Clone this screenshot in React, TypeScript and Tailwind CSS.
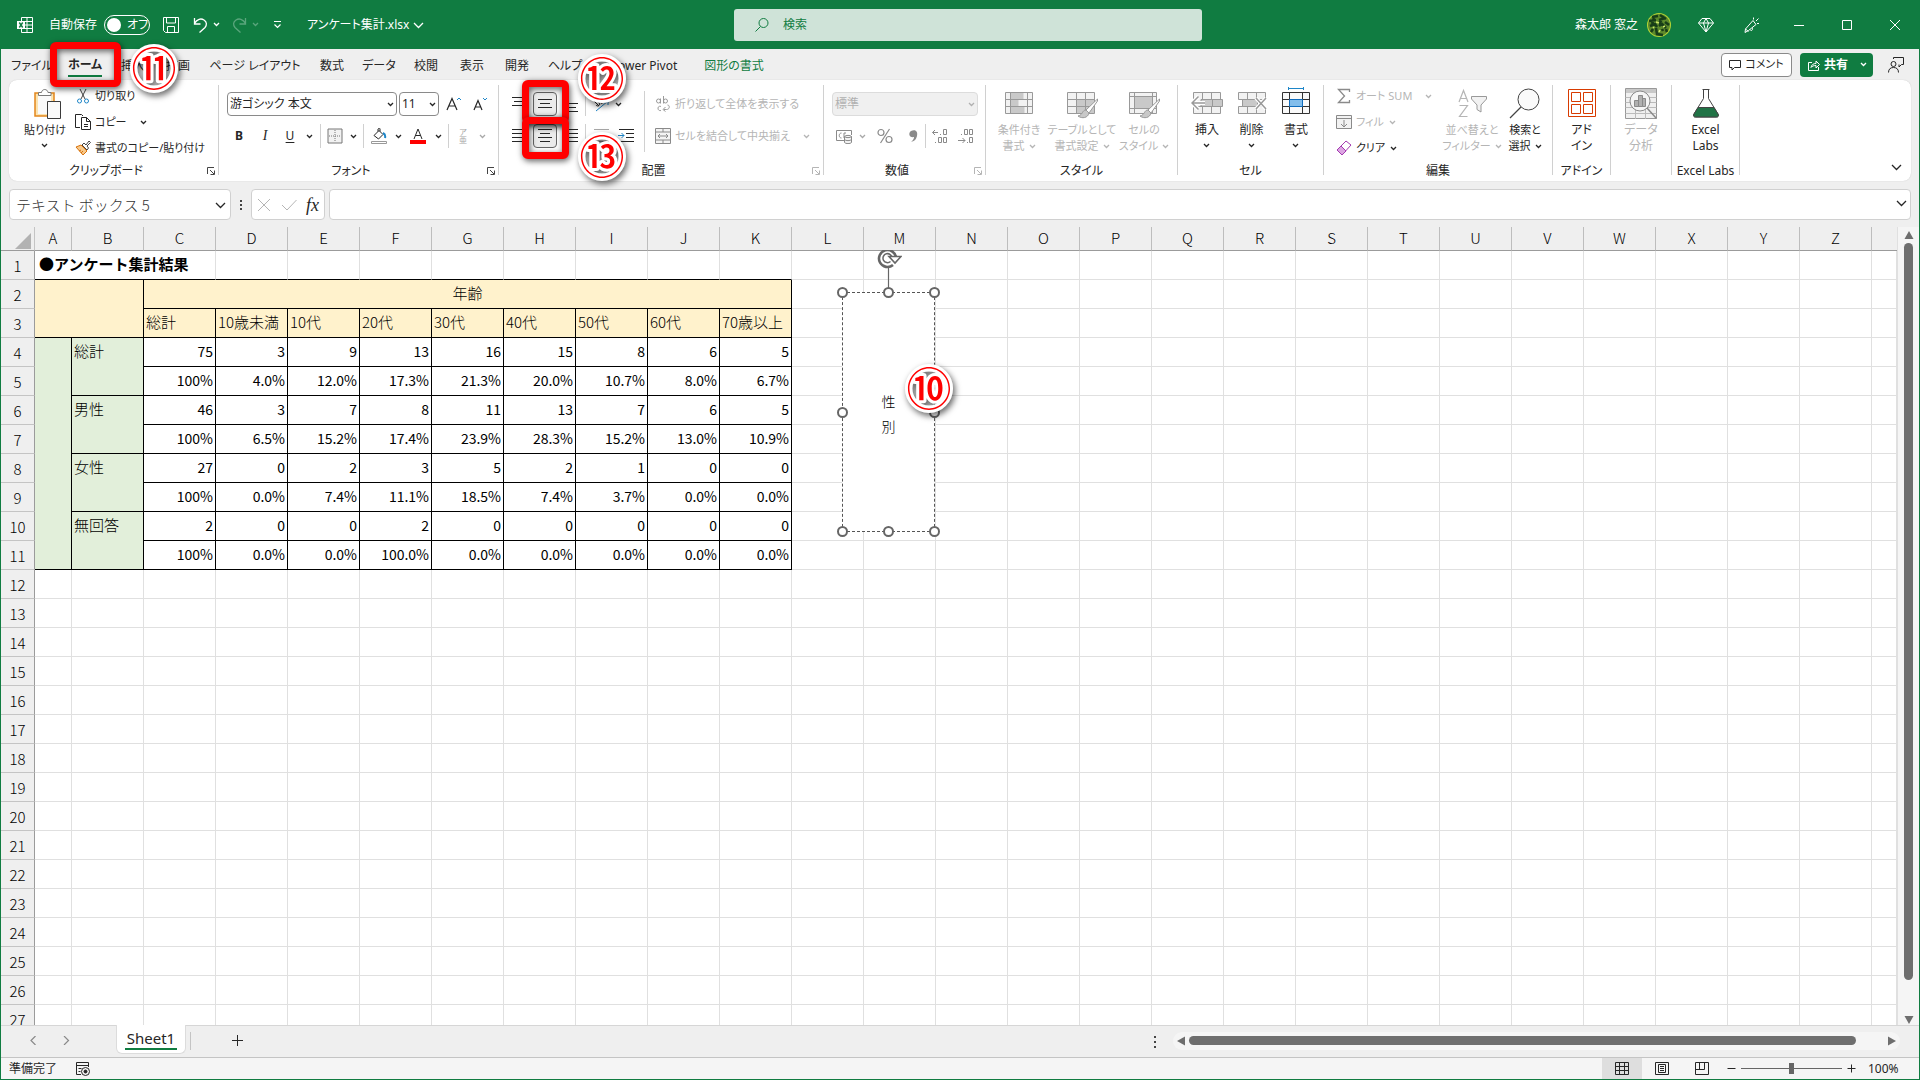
import React from 'react'

type IconProps = { children: React.ReactNode; size?: number; className?: string }

const Icon = ({ children, size = 16, className = '' }: IconProps) => (
	<svg
		width={size}
		height={size}
		viewBox={`0 0 ${size} ${size}`}
		fill="none"
		stroke="currentColor"
		className={`shrink-0 ${className}`}
		aria-hidden="true"
	>
		{children}
	</svg>
)

const Chevron = ({ className = '' }: { className?: string }) => (
	<svg
		width="7"
		height="5"
		viewBox="0 0 7 5"
		fill="none"
		stroke="currentColor"
		strokeWidth="1.3"
		className={`shrink-0 ${className}`}
		aria-hidden="true"
	>
		<path d="M1 1l2.5 2.5L6 1" />
	</svg>
)

const WideChevron = ({ className = '' }: { className?: string }) => (
	<svg
		width="11"
		height="7"
		viewBox="0 0 11 7"
		fill="none"
		stroke="currentColor"
		strokeWidth="1.3"
		className={`shrink-0 ${className}`}
		aria-hidden="true"
	>
		<path d="M1 1l4.5 4.5L10 1" />
	</svg>
)

/* ---------- title bar ---------- */

const TitleBar = () => (
	<header className="grid h-[49px] shrink-0 grid-cols-[733fr_468fr_717fr] items-center bg-[#107c41] text-white">
		<div className="flex items-center pl-4">
			<Icon size={16}>
				<path d="M4.5 4V.5h11v15h-11V12M10 .5v15M4.5 4.5h11M4.5 8h11M4.5 11.5h11" />
				<path d="M0 4h8v8H0z" fill="#fff" stroke="none" />
				<path d="M2.3 5.5l3.4 5M5.7 5.5l-3.4 5" stroke="#107c41" strokeWidth="1.4" />
			</Icon>
			<span className="ml-4">自動保存</span>
			<button
				type="button"
				role="switch"
				aria-checked="false"
				aria-label="自動保存"
				className="ml-[7px] flex h-5 w-[46px] items-center rounded-full border border-white pl-[2px]"
			>
				<span className="size-[14px] rounded-full bg-white" />
				<span className="ml-[6px] leading-4">オフ</span>
			</button>
			<button type="button" aria-label="保存" className="ml-[13px]">
				<Icon>
					<path d="M.5.5h15v15h-13l-2-2zM3.5.5v5.5h9V.5M4.5 15.5v-6h7v6" />
				</Icon>
			</button>
			<button type="button" aria-label="元に戻す" className="ml-[13px] flex items-center">
				<Icon>
					<path d="M2.5 1v6h6M2.5 6.5C5 2 9 1 12 3c3 2 3 5 1 7.5L7.5 15.5" strokeWidth="1.3" />
				</Icon>
				<Chevron className="ml-[5px]" />
			</button>
			<button
				type="button"
				aria-label="やり直し"
				disabled
				className="ml-3 flex items-center text-[#5aa57c]"
			>
				<Icon>
					<path d="M13.5 1v6h-6M13.5 6.5C11 2 7 1 4 3C1 5 1 8 3 10.500L8.500 15.500" strokeWidth="1.3" />
				</Icon>
				<Chevron className="ml-1" />
			</button>
			<button type="button" aria-label="クイック アクセスのカスタマイズ" className="ml-[14px]">
				<Icon size={9}>
					<path d="M1 1.500h7M1.500 4.500l3 3 3-3" strokeWidth="1.2" />
				</Icon>
			</button>
			<button type="button" className="ml-[25px] flex items-center gap-1 pt-px">
				アンケート集計.xlsx
				<WideChevron />
			</button>
		</div>
		<label className="flex h-8 items-center gap-[13px] rounded-[3px] bg-[#cfe3d8] pl-5 text-[#107c41]">
			<Icon>
				<circle cx="9.500" cy="6" r="4.500" />
				<path d="M6.500 9.500L1.500 14.500" />
			</Icon>
			<input
				type="search"
				aria-label="検索"
				placeholder="検索"
				className="min-w-0 flex-1 bg-transparent outline-none placeholder:text-[#107c41]"
			/>
		</label>
		<div className="flex items-center justify-end">
			<span>森太郎 窓之</span>
			<svg width="24" height="24" viewBox="0 0 24 24" className="ml-[9px]" aria-hidden="true">
				<circle cx="12" cy="12" r="12" fill="#b4d435" />
				<circle cx="12" cy="12" r="11" fill="#5d8a2c" />
				<path
					d="M5 4l6-1M13 2l6 4M2 8l7-1M7 5l-2 6M12 7l6-2M15 6l-3 5M18 9l4 3M3 13l5-2 2 3M12 13l3-2 4 4M6 16l-2 3M9 15l1 6 6 1M15 16l1 2M19 16l1 3"
					stroke="#183d18"
					strokeWidth="2.6"
					fill="none"
				/>
				<path d="M9 9l3 1M6 14l1 1M13 17l-1 2M18 13l-2 1" stroke="#cfe86a" strokeWidth="1.5" />
			</svg>
			<button type="button" aria-label="Premium" className="ml-[27px]">
				<Icon>
					<path d="M4 1.500h8l3.500 4.500L8 15 .5 6zM.5 6h15M5.500 6L8 15l2.500-9L8 1.500z" />
				</Icon>
			</button>
			<button type="button" aria-label="新機能" className="ml-[30px]">
				<Icon>
					<path d="M9 3.500l3 4L4.500 13.500 1 15.500l.5-3.500zM1.500 12l3 2.500M6 12.500c1 2 3 1 2.500-2M9.500 2.500V.500M12 4l2.500-2.500M13 6.500h2" />
				</Icon>
			</button>
			<button type="button" aria-label="最小化" className="ml-[31px]">
				<Icon>
					<path d="M3 8.500h10" />
				</Icon>
			</button>
			<button type="button" aria-label="最大化" className="ml-8">
				<Icon>
					<path d="M3.500 3.500h9v9h-9z" />
				</Icon>
			</button>
			<button type="button" aria-label="閉じる" className="mr-4 ml-8">
				<Icon>
					<path d="M3 3l10 10M13 3L3 13" />
				</Icon>
			</button>
		</div>
	</header>
)

/* ---------- ribbon tabs ---------- */

const tabs = [
	{ label: 'ファイル', width: 'w-[54px]' },
	{ label: 'ホーム', width: 'w-[52px]', active: true },
	{ label: '挿入', width: 'w-11' },
	{ label: '描画', width: 'w-[46px]' },
	{ label: 'ページ レイアウト', width: 'w-[108px]' },
	{ label: '数式', width: 'w-[46px]' },
	{ label: 'データ', width: 'w-12' },
	{ label: '校閲', width: 'w-[46px]' },
	{ label: '表示', width: 'w-[46px]' },
	{ label: '開発', width: 'w-11' },
	{ label: 'ヘルプ', width: 'w-[52px]' },
	{ label: 'Power Pivot', width: 'w-[106px]' },
	{ label: '図形の書式', width: 'w-[74px]', context: true },
]

const TabBar = () => (
	<nav className="flex h-[31px] shrink-0 items-center pr-[15px] pl-1">
		{tabs.map((tab) => (
			<button
				key={tab.label}
				type="button"
				className={`flex shrink-0 justify-center whitespace-nowrap ${tab.width} ${
					tab.context ? 'text-[#107c41]' : ''
				}`}
			>
				<span
					className={
						tab.active
							? 'border-b-2 border-[#107c41] pt-[3px] font-bold leading-5'
							: 'pt-[2px] leading-5'
					}
				>
					{tab.label}
				</span>
			</button>
		))}
		<div className="ml-auto flex items-center">
			<button
				type="button"
				className="flex h-6 w-[71px] items-center justify-center gap-1 rounded border border-[#8a8a8a] bg-white"
			>
				<Icon size={12}>
					<path d="M.5 1.500h11v7h-6l-2.500 2.500v-2.500h-2.500z" />
				</Icon>
				<span className="text-[11px]">コメント</span>
			</button>
			<button
				type="button"
				className="ml-2 flex h-6 w-[73px] items-center rounded bg-[#107c41] pl-2 font-bold text-white"
			>
				<Icon size={12}>
					<path d="M4 3.500H.500v8h10V8M3 8.500c.5-3 2.500-4 5-4V2l3.500 3.500L8 9V6.500c-2 0-4 .5-5 2z" />
				</Icon>
				<span className="ml-1">共有</span>
				<Chevron className="ml-3" />
			</button>
			<button type="button" aria-label="フィードバック" className="ml-[15px]">
				<Icon>
					<circle cx="5.500" cy="7" r="2.500" />
					<path d="M.5 15.500c0-3.500 2-5 5-5s5 1.500 5 5M5.500 2V.500h10v7h-2l-2.500 2.500v-2.500" />
				</Icon>
			</button>
		</div>
	</nav>
)

/* ---------- ribbon building blocks ---------- */

const Launcher = ({ disabled = false }: { disabled?: boolean }) => (
	<button
		type="button"
		aria-label="詳細設定"
		disabled={disabled}
		className="mr-[3px] text-[#444] disabled:text-[#b5b5b5]"
	>
		<Icon size={8}>
			<path d="M.5 7V.500H7M3 3l4 4M7.500 3.500v4h-4" />
		</Icon>
	</button>
)

type GroupProps = {
	label: string
	width: string
	launcher?: 'on' | 'off'
	children: React.ReactNode
}

const Group = ({ label, width, launcher, children }: GroupProps) => (
	<section className={`flex shrink-0 ${width}`}>
		<div className="flex min-w-0 flex-1 flex-col">
			<div className="flex flex-1">{children}</div>
			<div className="flex h-5 items-center">
				<span className={`flex-1 text-center whitespace-nowrap ${launcher ? 'pr-1' : ''}`}>
					{label}
				</span>
				{launcher && <Launcher disabled={launcher === 'off'} />}
			</div>
		</div>
		<div className="mt-[5px] h-[90px] w-px bg-[#d0d0d0]" />
	</section>
)

type BigButtonProps = {
	icon: React.ReactNode
	lines: string[]
	chevron?: 'inline' | 'below'
	disabled?: boolean
	className: string
}

const BigButton = ({ icon, lines, chevron, disabled, className }: BigButtonProps) => (
	<button
		type="button"
		disabled={disabled}
		className={`flex shrink-0 flex-col items-center pt-2 text-[#262626] disabled:text-[#b5b5b5] ${className}`}
	>
		{icon}
		<span className="mt-[2px] flex flex-col items-center leading-4 whitespace-nowrap">
			{lines.map((line, i) => (
				<span key={line} className="flex items-center gap-1">
					{line}
					{chevron === 'inline' && i === lines.length - 1 && <Chevron />}
				</span>
			))}
			{chevron === 'below' && <Chevron className="mt-[5px]" />}
		</span>
	</button>
)

type SmallButtonProps = {
	icon: React.ReactNode
	label: string
	chevron?: string
	disabled?: boolean
}

const SmallButton = ({ icon, label, chevron, disabled }: SmallButtonProps) => (
	<button
		type="button"
		disabled={disabled}
		className="flex h-[26px] items-center gap-1 text-[11px] whitespace-nowrap disabled:text-[#b5b5b5]"
	>
		{icon}
		<span className="pt-px">{label}</span>
		{chevron && <Chevron className={chevron} />}
	</button>
)

type ToolProps = {
	label: string
	width?: string
	disabled?: boolean
	pressed?: boolean
	children: React.ReactNode
}

const Tool = ({ label, width = 'w-6', disabled, pressed, children }: ToolProps) => (
	<button
		type="button"
		aria-label={label}
		aria-pressed={pressed}
		disabled={disabled}
		className={`flex h-6 shrink-0 items-center justify-center disabled:text-[#a8a8a8] ${width} ${
			pressed ? 'rounded border border-[#666] bg-[#ebebeb]' : ''
		}`}
	>
		{children}
	</button>
)

const Divider = ({ className = 'mx-[3px]' }: { className?: string }) => (
	<div className={`h-6 w-px shrink-0 bg-[#d0d0d0] ${className}`} />
)

/* ---------- ribbon groups ---------- */

const ClipboardGroup = () => (
	<Group label="クリップボード" width="w-[210px]" launcher="on">
		<BigButton
			className="ml-[13px] w-[46px] text-[11px]"
			lines={['貼り付け']}
			chevron="below"
			icon={
				<Icon size={32}>
					<path d="M6 5h19v23H6z" fill="#fbe3b0" stroke="#e3861b" strokeWidth="1.5" />
					<path d="M9 8h13v18H9z" fill="#fafafa" stroke="none" />
					<path d="M9.500 7.500v-3h3c.5-4 6-4 6.500 0h3v3z" fill="#fff" stroke="#7a7a7a" />
					<path d="M18.500 13.500h13v17h-13z" fill="#fafafa" stroke="#3b3b3b" />
				</Icon>
			}
		/>
		<div className="ml-[7px] flex flex-col items-start pt-[3px]">
			<SmallButton
				label="切り取り"
				icon={
					<Icon>
						<path d="M5 1l5 10M11 1L6 11" stroke="#444" />
						<circle cx="4.500" cy="13" r="2" stroke="#1e86c8" />
						<circle cx="11.500" cy="13" r="2" stroke="#1e86c8" />
					</Icon>
				}
			/>
			<SmallButton
				label="コピー"
				chevron="ml-[9px]"
				icon={
					<Icon>
						<path d="M5 13.500H.500V.500h6L8 2M6.500 3.500h5l4 4v8h-9zM11.500 3.500v4h4M9 10.500h4M9 12.500h4" />
					</Icon>
				}
			/>
			<SmallButton
				label="書式のコピー/貼り付け"
				icon={
					<Icon>
						<path d="M1 7l5-2 6 6-4 4z" fill="#f7c98b" stroke="#d9730d" />
						<path d="M4 11l2-1M6 13l2-2" stroke="#d9730d" />
						<path d="M7 5l2-2 2 2 3-4 1.500 1.500L12 6l1.500 2L12 10z" fill="#fff" stroke="#444" />
					</Icon>
				}
			/>
		</div>
	</Group>
)

const FontGroup = () => (
	<Group label="フォント" width="w-[280px]" launcher="on">
		<div className="flex flex-col gap-2 pt-3 pl-2">
			<div className="flex items-center">
				<div className="flex h-6 w-[170px] items-center rounded border border-[#8a8a8a] bg-white pr-[2px]">
					<select aria-label="フォント" className="flex-1 appearance-none pl-[2px] outline-none">
						<option>游ゴシック 本文</option>
					</select>
					<Chevron />
				</div>
				<div className="ml-[2px] flex h-6 w-10 items-center rounded border border-[#8a8a8a] bg-white pr-[2px]">
					<select
						aria-label="フォント サイズ"
						className="min-w-0 flex-1 appearance-none pl-[2px] outline-none"
					>
						<option>11</option>
					</select>
					<Chevron />
				</div>
				<Tool label="フォント サイズの拡大" width="w-[30px]">
					<Icon>
						<path d="M1 14L6 2.500 11 14M2.800 10h6.400" strokeWidth="1.2" />
						<path d="M11 4l2-2 2 2" stroke="#1e86c8" />
					</Icon>
				</Tool>
				<Tool label="フォント サイズの縮小" width="w-6">
					<Icon>
						<path d="M1 14L5 4.500 9 14M2.500 11h5" strokeWidth="1.2" />
						<path d="M10 2l2 2 2-2" stroke="#1e86c8" />
					</Icon>
				</Tool>
			</div>
			<div className="flex items-center">
				<Tool label="太字">
					<b>B</b>
				</Tool>
				<Tool label="斜体" width="w-7">
					<i className="font-['Liberation_Serif',serif] text-sm">I</i>
				</Tool>
				<Tool label="下線" width="w-[22px]">
					<u className="underline-offset-2">U</u>
				</Tool>
				<Tool label="下線の種類" width="w-4">
					<Chevron />
				</Tool>
				<Divider />
				<Tool label="罫線" width="w-[22px]">
					<Icon>
						<path d="M1 1h14v14H1z" fill="#f2f2f2" stroke="#777" />
						<path d="M8 2v12M2 8h12" strokeDasharray="1 1" stroke="#777" />
					</Icon>
				</Tool>
				<Tool label="罫線の種類" width="w-[14px]">
					<Chevron />
				</Tool>
				<Divider />
				<Tool label="塗りつぶしの色">
					<Icon>
						<path d="M3 7.500L8 2.500l4 4L7.500 11zM7 3.500V1c1-1 2-1 2 0v2.500" />
						<path d="M12 5c2 1 2.500 3 2 5" stroke="#1e86c8" strokeWidth="2" />
						<path d="M.5 13.500h15v2H.500z" fill="#fff" stroke="#999" />
					</Icon>
				</Tool>
				<Tool label="塗りつぶしの種類" width="w-[14px]">
					<Chevron />
				</Tool>
				<Tool label="フォントの色" width="w-[26px]">
					<Icon>
						<path d="M4 11L8 1l4 10M5.500 7.500h5" />
						<path d="M0 12h16v4H0z" fill="#f00" stroke="none" />
					</Icon>
				</Tool>
				<Tool label="フォントの色の種類" width="w-[14px]">
					<Chevron />
				</Tool>
				<Divider />
				<Tool label="ふりがな" width="w-[22px]" disabled>
					<span className="flex flex-col items-center text-[8px] leading-[8px]">
						<span>ア</span>
						<span>亜</span>
					</span>
				</Tool>
				<Tool label="ふりがなの設定" width="w-4" disabled>
					<Chevron />
				</Tool>
			</div>
		</div>
	</Group>
)

const AlignGroup = () => (
	<Group label="配置" width="w-[325px]" launcher="off">
		<div className="flex flex-col gap-2 pt-3 pl-[9px]">
			<div className="flex items-center gap-px">
				<Tool label="上揃え">
					<Icon>
						<path d="M0 1.500h16M2 5.500h12M0 9.500h16" />
					</Icon>
				</Tool>
				<Tool label="上下中央揃え" pressed>
					<Icon>
						<path d="M1 3.500h14M3 7.500h10M1 11.500h14" />
					</Icon>
				</Tool>
				<Tool label="下揃え">
					<Icon>
						<path d="M0 7.500h16M2 11.500h12M0 15.500h16" />
					</Icon>
				</Tool>
				<Divider className="mx-[2px]" />
				<Tool label="方向">
					<Icon>
						<path d="M3 15L15 5M15 5h-5M15 5v4" stroke="#1e86c8" />
						<path d="M1 5l5 5M3 9a2 2 0 1 0 2-3M7 3l2 5" />
					</Icon>
				</Tool>
				<Tool label="方向の種類" width="w-2">
					<Chevron />
				</Tool>
			</div>
			<div className="flex items-center gap-px">
				<Tool label="左揃え">
					<Icon>
						<path d="M0 1.500h16M0 5.500h10M0 9.500h16M0 13.500h10" />
					</Icon>
				</Tool>
				<Tool label="中央揃え" pressed>
					<Icon>
						<path d="M1 1.500h14M3 5.500h10M1 9.500h14M3 13.500h10" />
					</Icon>
				</Tool>
				<Tool label="右揃え">
					<Icon>
						<path d="M0 1.500h16M6 5.500h10M0 9.500h16M6 13.500h10" />
					</Icon>
				</Tool>
				<Divider className="mx-[2px]" />
				<Tool label="インデントを減らす" disabled>
					<Icon>
						<path d="M1 1.500h15M8 5.500h8M8 9.500h8M1 13.500h15M6 7.500H1M3 5L.500 7.500 3 10" />
					</Icon>
				</Tool>
				<Tool label="インデントを増やす">
					<Icon>
						<path d="M1 1.500h15M8 5.500h8M8 9.500h8M1 13.500h15" />
						<path d="M0 7.500h6M3.500 5L6 7.500 3.500 10" stroke="#1e86c8" />
					</Icon>
				</Tool>
			</div>
		</div>
		<div className="mt-[11px] ml-[6px] h-[61px] w-px bg-[#d0d0d0]" />
		<div className="flex flex-col items-start gap-[6px] pt-[11px] pl-[10px]">
			<SmallButton
				label="折り返して全体を表示する"
				disabled
				icon={
					<Icon className="text-[#9a9a9a]">
						<circle cx="3.500" cy="5" r="2" />
						<path d="M5.500 2.500v5M8.500 0v7.500" />
						<circle cx="10.500" cy="5" r="2" />
						<path d="M6 10.500c-4-1.500-4 5 0 4M9 13.500h2.500c3.500 0 3.500-4.500 1-4.500M10.500 11l-2.500 2.500 2.500 2" />
					</Icon>
				}
			/>
			<SmallButton
				label="セルを結合して中央揃え"
				chevron="ml-[9px]"
				disabled
				icon={
					<Icon className="text-[#8a8a8a]">
						<path d="M.5.500h15v15H.500z" fill="#f4f4f4" />
						<path d="M.5 4h15M.500 12h15M8 .500V4M8 12v3.500M3 8h10M5 6L3 8l2 2M11 6l2 2-2 2" />
					</Icon>
				}
			/>
		</div>
	</Group>
)

const NumberGroup = () => (
	<Group label="数値" width="w-[162px]" launcher="off">
		<div className="flex flex-col gap-2 pt-3 pl-2">
			<div className="flex h-6 w-[146px] items-center rounded border border-[#dcdcdc] bg-[#f0f0f0] pr-[2px] text-[#b0b0b0]">
				<select
					aria-label="数値の書式"
					disabled
					className="flex-1 appearance-none pl-[2px] disabled:opacity-100"
				>
					<option>標準</option>
				</select>
				<Chevron />
			</div>
			<div className="flex items-center">
				<Tool label="通貨表示形式" disabled>
					<Icon className="text-[#8a8a8a]">
						<path d="M8 12.500H.500v-10h15V7M5.500 5c-3 0-3 5 0 5M8 10V5h2" />
						<path
							d="M8.500 8.500v6c1 1.500 6 1.500 7 0v-6c-1-1.500-6-1.500-7 0c1 1.500 6 1.500 7 0M8.500 11.500c1 1.500 6 1.500 7 0"
							fill="#f4f4f4"
						/>
					</Icon>
				</Tool>
				<Tool label="通貨の種類" width="w-3" disabled>
					<Chevron />
				</Tool>
				<Tool label="パーセント" width="w-[34px]" disabled>
					<Icon className="text-[#8a8a8a]">
						<circle cx="4" cy="4.500" r="3" strokeWidth="1.2" />
						<circle cx="12" cy="11.500" r="3" strokeWidth="1.2" />
						<path d="M12.500 1l-9 14" strokeWidth="1.2" />
					</Icon>
				</Tool>
				<Tool label="桁区切り" width="w-[19px]" disabled>
					<Icon size={14}>
						<path
							d="M6 2c5-2 7 1 6 5-1 4-3 5-6 6 2-2 3-3 3-5-5 1-6-4-3-6z"
							fill="#8a8a8a"
							stroke="none"
						/>
					</Icon>
				</Tool>
				<Divider className="mx-1" />
				<Tool label="小数点以下の表示桁数を増やす" width="w-5" disabled>
					<Icon className="text-[#8a8a8a]">
						<path d="M.5 4.500H6M3 2L.500 4.500 3 7M8 6.500h1M3 14.500h1" />
						<path d="M11.500 1.500h3v5h-3zM6.500 9.500h3v5h-3zM11.500 9.500h3v5h-3z" />
					</Icon>
				</Tool>
				<Tool label="小数点以下の表示桁数を減らす" width="w-8" disabled>
					<Icon className="text-[#8a8a8a]">
						<path d="M0 12.500h7M4.500 10L7 12.500 4.500 15M3 6.500h1M9 14.500h1" />
						<path d="M6.500 1.500h3v5h-3zM11.500 1.500h3v5h-3zM11.500 9.500h3v5h-3z" />
					</Icon>
				</Tool>
			</div>
		</div>
	</Group>
)

const Brush = () => (
	<>
		<path d="M31.500 11L20 22l3 3 8.500-12z" fill="#fff" stroke="#999" />
		<path d="M20 22c-4 0-3 5-8 6 4 3 10 2 11-3z" fill="#c8c8c8" stroke="#999" />
	</>
)

const StyleGroup = () => (
	<Group label="スタイル" width="w-[192px]">
		<BigButton
			className="ml-px w-16 text-[11px]"
			lines={['条件付き', '書式']}
			chevron="inline"
			disabled
			icon={
				<Icon size={32}>
					<path d="M2.500 4.500h27v21h-27z" fill="#f2f2f2" stroke="#999" />
					<path d="M7.500 5h13v6h-13zM7.500 12h8v6h-8zM7.500 19h14v6h-14z" fill="#c9c9c9" stroke="none" />
					<path d="M7.500 4.500v21M24.500 4.500v21M2.500 11.500h27M2.500 18.500h27" stroke="#999" />
				</Icon>
			}
		/>
		<BigButton
			className="w-[62px] text-[11px]"
			lines={['テーブルとして', '書式設定']}
			chevron="inline"
			disabled
			icon={
				<Icon size={32}>
					<path d="M1.500 4.500h27v21h-27z" fill="#f2f2f2" stroke="#999" />
					<path d="M10 11h18v14H10z" fill="#c9c9c9" stroke="none" />
					<path d="M10.500 4.500v21M19.500 4.500v21M1.500 11.500h27M1.500 18.500h27" stroke="#999" />
					<Brush />
				</Icon>
			}
		/>
		<BigButton
			className="w-[62px] text-[11px]"
			lines={['セルの', 'スタイル']}
			chevron="inline"
			disabled
			icon={
				<Icon size={32}>
					<path d="M1.500 4.500h27v21h-27z" fill="#f2f2f2" stroke="#999" />
					<path d="M7 9h17v11H7z" fill="#c9c9c9" stroke="none" />
					<path d="M6.500 4.500v21M24.500 4.500v21M1.500 8.500h27M1.500 20.500h27" stroke="#999" />
					<Brush />
				</Icon>
			}
		/>
	</Group>
)

const CellGroup = () => (
	<Group label="セル" width="w-[146px]">
		<BigButton
			className="ml-[7px] w-11"
			lines={['挿入']}
			chevron="below"
			icon={
				<Icon size={32}>
					<path d="M2.500 4.500h27v21h-27z" fill="#f2f2f2" stroke="#999" />
					<path d="M11.500 4.500v21M20.500 4.500v21M2.500 18.500h27" stroke="#999" />
					<path d="M10 11.500h21.500v7H10z" fill="#c9c9c9" stroke="#999" />
					<path d="M21.500 11.500v7" stroke="#999" />
					<path d="M14 15H2M7.500 8.500L1 15l6.500 6.500" stroke="#fff" strokeWidth="4" />
					<path d="M14 15H1.500M7.500 8.500L1 15l6.500 6.500" stroke="#999" strokeWidth="1.5" />
				</Icon>
			}
		/>
		<BigButton
			className="w-[45px]"
			lines={['削除']}
			chevron="below"
			icon={
				<Icon size={32}>
					<path d="M2.500 4.500h27v7h-27zM2.500 18.500h27v7h-27z" fill="#f2f2f2" stroke="#999" />
					<path d="M11.500 4.500v7M20.500 4.500v7M11.500 18.500v7M20.500 18.500v7" stroke="#999" />
					<path d="M6.500 11.500h15v7h-15z" fill="#c9c9c9" stroke="#999" />
					<path d="M20 10l10 11M30 10L20 21" stroke="#fff" strokeWidth="4" />
					<path d="M20 10l10 11M30 10L20 21" stroke="#999" strokeWidth="1.5" />
				</Icon>
			}
		/>
		<BigButton
			className="w-11"
			lines={['書式']}
			chevron="below"
			icon={
				<Icon size={32} className="overflow-visible">
					<path d="M8.500-1v3M23.500-1v3M8.500.500h15" stroke="#1e86c8" />
					<path d="M2.500 4.500h27v21h-27z" fill="#fafafa" stroke="#333" />
					<path d="M9.500 4.500v21M22.500 4.500v21M2.500 11.500h27M2.500 18.500h27" stroke="#333" />
					<path d="M9.500 11.500h13v7h-13z" fill="#83beec" stroke="#0f6cbd" />
				</Icon>
			}
		/>
	</Group>
)

const EditGroup = () => (
	<Group label="編集" width="w-[229px]">
		<div className="flex w-[117px] flex-col items-start pt-[3px] pl-3">
			<SmallButton
				label="オート SUM"
				chevron="ml-[9px]"
				disabled
				icon={
					<Icon>
						<path d="M13.500 4V1.500H2.500L8.500 8l-6 6.500h11V12" stroke="#8a8a8a" strokeWidth="1.3" />
					</Icon>
				}
			/>
			<SmallButton
				label="フィル"
				chevron="ml-px"
				disabled
				icon={
					<Icon>
						<path d="M.5 1.500h15v13H.500zM.500 4.500h15" fill="#f2f2f2" stroke="#8a8a8a" />
						<path d="M8 6v7M5 10l3 3 3-3" stroke="#8a8a8a" />
					</Icon>
				}
			/>
			<SmallButton
				label="クリア"
				chevron="ml-px"
				icon={
					<Icon>
						<path d="M1 10l9-9 5 4-9 10z" fill="#fff" stroke="#a33ab0" />
						<path d="M1 10l4-4 5 5-4 4z" fill="#dca5e2" stroke="#a33ab0" />
					</Icon>
				}
			/>
		</div>
		<BigButton
			className="w-[62px] text-[11px]"
			lines={['並べ替えと', 'フィルター']}
			chevron="inline"
			disabled
			icon={
				<Icon size={32}>
					<path d="M3 14L7.500 2.500 12 14M4.500 10.500h6M3.500 17.500h8L3.500 28.500h8" strokeWidth="1.2" />
					<path d="M15.500 8.500h15V11l-5.500 6v7l-4-2.500V17l-5.500-6z" fill="#f2f2f2" stroke="#999" />
				</Icon>
			}
		/>
		<BigButton
			className="w-11 text-[11px]"
			lines={['検索と', '選択']}
			chevron="inline"
			icon={
				<Icon size={32}>
					<circle cx="19.500" cy="11.500" r="10.500" fill="#fafafa" stroke="#444" />
					<path d="M12 19L1 30" stroke="#444" strokeWidth="1.3" />
				</Icon>
			}
		/>
	</Group>
)

const ExtraGroups = () => (
	<>
		<Group label="アドイン" width="w-[58px]">
			<BigButton
				className="w-full"
				lines={['アド', 'イン']}
				icon={
					<Icon size={32}>
						<path
							d="M2.500 1.500h27v27h-27zM5.500 4.500h9v9h-9zM17.500 4.500h9v9h-9zM5.500 16.500h9v9h-9zM17.500 16.500h9v9h-9z"
							stroke="#d83b01"
						/>
					</Icon>
				}
			/>
		</Group>
		<Group label="" width="w-[61px]">
			<BigButton
				className="w-full"
				lines={['データ', '分析']}
				disabled
				icon={
					<Icon size={32}>
						<path d="M.5.500h31v30H.500z" fill="#f0f0f0" stroke="#999" />
						<path d="M1 1h30v4H1z" fill="#c9c9c9" stroke="none" />
						<path
							d="M.5 9.500h31M.500 14.500h31M.500 19.500h31M.500 25.500h31M10.500 19v12M20.500 19v12"
							stroke="#bbb"
						/>
						<circle cx="15" cy="13" r="10" fill="#f5f5f5" stroke="#8a8a8a" />
						<path
							d="M9.500 12.500h4v6h-4zM13.500 7.500h4v11h-4zM17.500 10.500h3v8h-3z"
							fill="#b0b0b0"
							stroke="#8a8a8a"
						/>
						<path d="M22 20l9.500 10.500" stroke="#8a8a8a" strokeWidth="1.5" />
					</Icon>
				}
			/>
		</Group>
		<Group label="Excel Labs" width="w-[68px]">
			<BigButton
				className="w-full"
				lines={['Excel', 'Labs']}
				icon={
					<Icon size={32}>
						<path
							d="M12.500 1.500h7M13.500 1.500v9L4 26c-1 2 0 3 1.500 3h21c1.500 0 2.500-1 1.500-3l-9.500-15.500v-9"
							stroke="#444"
						/>
						<path
							d="M8 19.500h16l4 6.500c1 2 0 3-1.500 3h-21C4 29 3 28 4 26z"
							fill="#217346"
							stroke="#444"
						/>
					</Icon>
				}
			/>
		</Group>
	</>
)

const Ribbon = () => (
	<div className="mx-2 flex h-[101px] shrink-0 rounded-lg bg-white shadow-[0_0_1px_#bbb]">
		<ClipboardGroup />
		<FontGroup />
		<AlignGroup />
		<NumberGroup />
		<StyleGroup />
		<CellGroup />
		<EditGroup />
		<ExtraGroups />
		<button
			type="button"
			aria-label="リボンを折りたたむ"
			className="mr-[9px] mb-[10px] ml-auto self-end"
		>
			<WideChevron />
		</button>
	</div>
)

/* ---------- formula bar ---------- */

const FormulaBar = () => (
	<div className="mx-2 my-2 flex h-[31px] shrink-0 items-center">
		<div className="flex h-full w-[222px] items-center rounded border border-[#d0d0d0] bg-white pt-px pr-1">
			<input
				aria-label="名前ボックス"
				defaultValue="テキスト ボックス 5"
				className="min-w-0 flex-1 pl-[6px] font-['Noto_Sans_CJK_JP',sans-serif] text-[15px] font-light text-[#333] outline-none [font-feature-settings:normal]"
			/>
			<WideChevron />
		</div>
		<Icon size={20} className="text-[#444]">
			<path d="M9 5h2v2H9zM9 9h2v2H9zM9 13h2v2H9z" fill="currentColor" stroke="none" />
		</Icon>
		<div className="flex h-full w-[74px] items-center justify-between rounded border border-[#d0d0d0] bg-white px-[5px]">
			<button type="button" aria-label="キャンセル" disabled className="text-[#b5b5b5]">
				<Icon size={14}>
					<path d="M1 1l12 12M13 1L1 13" />
				</Icon>
			</button>
			<button type="button" aria-label="入力" disabled className="text-[#b5b5b5]">
				<Icon size={16}>
					<path d="M1 8l5 5L15.500 3" />
				</Icon>
			</button>
			<button
				type="button"
				aria-label="関数の挿入"
				className="font-['Liberation_Serif',serif] text-lg leading-5 italic"
			>
				fx
			</button>
		</div>
		<div className="ml-1 flex h-full flex-1 items-center rounded border border-[#d0d0d0] bg-white pr-[3px]">
			<input aria-label="数式バー" className="min-w-0 flex-1 pl-2 text-[15px] outline-none" />
			<WideChevron className="mb-[3px]" />
		</div>
	</div>
)

/* ---------- worksheet ---------- */

const letters = 'ABCDEFGHIJKLMNOPQRSTUVWXYZ'.split('')

const ages = ['総計', '10歳未満', '10代', '20代', '30代', '40代', '50代', '60代', '70歳以上']

const survey = [
	{
		label: '総計',
		counts: [75, 3, 9, 13, 16, 15, 8, 6, 5],
		rates: ['100%', '4.0%', '12.0%', '17.3%', '21.3%', '20.0%', '10.7%', '8.0%', '6.7%'],
	},
	{
		label: '男性',
		counts: [46, 3, 7, 8, 11, 13, 7, 6, 5],
		rates: ['100%', '6.5%', '15.2%', '17.4%', '23.9%', '28.3%', '15.2%', '13.0%', '10.9%'],
	},
	{
		label: '女性',
		counts: [27, 0, 2, 3, 5, 2, 1, 0, 0],
		rates: ['100%', '0.0%', '7.4%', '11.1%', '18.5%', '7.4%', '3.7%', '0.0%', '0.0%'],
	},
	{
		label: '無回答',
		counts: [2, 0, 0, 2, 0, 0, 0, 0, 0],
		rates: ['100%', '0.0%', '0.0%', '100.0%', '0.0%', '0.0%', '0.0%', '0.0%', '0.0%'],
	},
]

const Blanks = ({ count }: { count: number }) => (
	<>
		{Array.from({ length: count }, (_, i) => (
			<td key={i} className="border-r border-b border-[#e0e0e0]" />
		))}
	</>
)

const SheetRow = ({ n, children }: { n: number; children: React.ReactNode }) => (
	<tr className="h-[29px]">
		<th
			scope="row"
			className="border-r border-b border-r-[#9b9b9b] border-b-[#c4c4c4] bg-[#efefef] pt-[2px] text-center font-light"
		>
			{n}
		</th>
		{children}
	</tr>
)

const dark = 'border-r border-b border-black'

const numberCells = (values: (string | number)[]) =>
	values.map((value, i) => (
		<td key={i} className={`${dark} pr-[2px] pb-[2px] text-right text-sm leading-5 font-normal`}>
			{value}
		</td>
	))

const handles = [
	'-top-[6px] -left-[6px]',
	'-top-[6px] left-10',
	'-top-[6px] -right-[6px]',
	'top-[114px] -left-[6px]',
	'top-[114px] -right-[6px]',
	'-bottom-[6px] -left-[6px]',
	'-bottom-[6px] left-10',
	'-bottom-[6px] -right-[6px]',
]

// floats over the cells, anchored to the sheet's origin
const TextBoxShape = () => (
	<div className="absolute top-[65px] left-[841px] flex h-[240px] w-[93px] flex-col items-center justify-center border border-dashed border-[#555] bg-white pt-[3px] text-sm leading-[25px]">
		<span>性</span>
		<span>別</span>
		<svg
			width="28"
			height="42"
			viewBox="0 0 28 42"
			fill="none"
			stroke="#666"
			className="absolute -top-[43px] left-[31px]"
			aria-hidden="true"
		>
			<path d="M14.500 18v24" strokeWidth="1.2" />
			<path d="M22 8a8.500 8.500 0 1 0-3 7" strokeWidth="2.6" />
			<path d="M18 8a4.500 4.500 0 1 0-1.500 3.500" strokeWidth="1.5" />
			<path d="M15 6.500h12l-6 6.500z" fill="#fff" strokeWidth="1.6" />
		</svg>
		{handles.map((place) => (
			<span
				key={place}
				className={`absolute size-[11px] rounded-full border-2 border-[#666] bg-white ${place}`}
			/>
		))}
	</div>
)

const Sheet = () => (
	<div className="relative min-w-0 flex-1 overflow-hidden bg-white font-['Noto_Sans_CJK_JP',sans-serif] text-[15px] leading-5 font-light text-black [font-feature-settings:normal]">
		<table className="w-full table-fixed border-separate border-spacing-0">
			<colgroup>
				<col className="w-[34px]" />
				<col className="w-[37px]" />
				{letters.slice(1).map((letter) => (
					<col key={letter} className="w-[72px]" />
				))}
				<col />
			</colgroup>
			<thead>
				<tr className="h-6 bg-[#efefef]">
					<td className="border-r border-b border-r-[#c4c4c4] border-b-[#9b9b9b]">
						<svg
							width="16"
							height="16"
							viewBox="0 0 16 16"
							className="mt-1 ml-[14px]"
							aria-hidden="true"
						>
							<path d="M16 0v16H0z" fill="#b2b2b2" />
						</svg>
					</td>
					{letters.map((letter) => (
						<th
							key={letter}
							scope="col"
							className="border-r border-b border-r-[#bdbdbd] border-b-[#9b9b9b] pb-[2px] font-light"
						>
							{letter}
						</th>
					))}
					<td className="border-b border-[#9b9b9b]" />
				</tr>
			</thead>
			<tbody>
				<SheetRow n={1}>
					<td
						colSpan={3}
						className="border-r border-b border-r-[#e0e0e0] border-b-black pb-[2px] pl-1 font-bold whitespace-nowrap"
					>
						●アンケート集計結果
					</td>
					{ages.slice(1).map((age) => (
						<td key={age} className="border-r border-b border-r-[#e0e0e0] border-b-black" />
					))}
					<Blanks count={16} />
				</SheetRow>
				<SheetRow n={2}>
					<td colSpan={2} rowSpan={2} className={`${dark} bg-[#fff2cc]`} />
					<td colSpan={9} className={`${dark} bg-[#fff2cc] pb-[2px] text-center`}>
						年齢
					</td>
					<Blanks count={16} />
				</SheetRow>
				<SheetRow n={3}>
					{ages.map((age) => (
						<td key={age} className={`${dark} bg-[#fff2cc] pb-[2px] pl-[2px] whitespace-nowrap`}>
							{age}
						</td>
					))}
					<Blanks count={16} />
				</SheetRow>
				{survey.map((group, g) => (
					<React.Fragment key={group.label}>
						<SheetRow n={4 + g * 2}>
							{g === 0 && <td rowSpan={8} className={`${dark} bg-[#e2efda]`} />}
							<td rowSpan={2} className={`${dark} bg-[#e2efda] pt-[3px] pl-[2px] align-top`}>
								{group.label}
							</td>
							{numberCells(group.counts)}
							<Blanks count={16} />
						</SheetRow>
						<SheetRow n={5 + g * 2}>
							{numberCells(group.rates)}
							<Blanks count={16} />
						</SheetRow>
					</React.Fragment>
				))}
				{Array.from({ length: 16 }, (_, i) => (
					<SheetRow key={i} n={12 + i}>
						<Blanks count={27} />
					</SheetRow>
				))}
			</tbody>
		</table>
		<TextBoxShape />
	</div>
)

const VerticalScroll = () => (
	<div className="flex w-[22px] shrink-0 flex-col items-center border-l border-[#e0e0e0] bg-[#f5f5f5] pt-1 pb-px text-[#6e6e6e]">
		<svg width="10" height="8" viewBox="0 0 10 8" fill="currentColor" aria-hidden="true">
			<path d="M5 0l4.500 8H.500z" />
		</svg>
		<div className="mt-1 mb-9 w-[9px] flex-1 rounded-full bg-[#6e6e6e]" />
		<svg width="10" height="8" viewBox="0 0 10 8" fill="currentColor" aria-hidden="true">
			<path d="M5 8l4.500-8H.500z" />
		</svg>
	</div>
)

/* ---------- sheet tabs and status bar ---------- */

const SheetTabs = () => (
	<div className="flex h-8 shrink-0 items-center border-t border-[#d6d6d6] pb-[2px]">
		<button type="button" aria-label="前のシート" className="ml-7 text-[#8a8a8a]">
			<Icon size={9}>
				<path d="M6.500 0L2 4.500 6.500 9" strokeWidth="1.2" />
			</Icon>
		</button>
		<button type="button" aria-label="次のシート" className="ml-6 text-[#8a8a8a]">
			<Icon size={9}>
				<path d="M2 0l4.500 4.500L2 9" strokeWidth="1.2" />
			</Icon>
		</button>
		<button
			type="button"
			className="-mt-px ml-[45px] h-[29px] w-[70px] self-start rounded-b-md border-x border-b border-[#dcdcdc] bg-white text-[15px] leading-5"
		>
			<span className="inline-block border-b-2 border-[#107c41] px-[2px]">Sheet1</span>
		</button>
		<div className="ml-1 h-[18px] w-px bg-[#c4c4c4]" />
		<button type="button" aria-label="新しいシート" className="ml-[41px]">
			<Icon size={11}>
				<path d="M5.500 0v11M0 5.500h11" />
			</Icon>
		</button>
		<div className="ml-auto flex w-[772px] items-center">
			<Icon size={16} className="text-[#444]">
				<path d="M7 3h2v2H7zM7 8h2v2H7zM7 13h2v2H7z" fill="currentColor" stroke="none" />
			</Icon>
			<div className="mr-[19px] ml-[10px] flex h-[18px] flex-1 items-center rounded-full bg-[#f5f5f5] px-1 text-[#6e6e6e]">
				<svg width="8" height="10" viewBox="0 0 8 10" fill="currentColor" aria-hidden="true">
					<path d="M0 5l8-4.500v9z" />
				</svg>
				<div className="mr-8 ml-1 h-[9px] flex-1 rounded-full bg-[#6e6e6e]" />
				<svg width="8" height="10" viewBox="0 0 8 10" fill="currentColor" aria-hidden="true">
					<path d="M8 5L0 .500v9z" />
				</svg>
			</div>
		</div>
	</div>
)

const StatusBar = () => (
	<footer className="flex h-[22px] shrink-0 items-center border-t border-[#c4c4c4] bg-[#f5f5f5] pl-2">
		<span>準備完了</span>
		<Icon className="ml-[18px]">
			<path d="M6 13.500H1.500v-12h12V6M1.500 4.500h12M3.500 7.500h3M3.500 10.500h2" />
			<circle cx="10.500" cy="10.500" r="4" />
			<circle cx="10.500" cy="10.500" r="1.500" fill="currentColor" />
		</Icon>
		<div className="ml-auto flex h-full items-center">
			<button
				type="button"
				aria-label="標準"
				aria-pressed="true"
				className="flex h-full w-10 items-center justify-center bg-[#dedede]"
			>
				<Icon size={14}>
					<path d="M.5.500h13v12H.500zM4.500.500v12M9.500.500v12M.500 4.500h13M.500 8.500h13" />
				</Icon>
			</button>
			<button type="button" aria-label="ページ レイアウト表示" className="flex w-10 justify-center">
				<Icon size={14}>
					<path d="M.5.500h13v12H.500zM3.500 2.500h7v8h-7zM5 4.500h4M5 6.500h4M5 8.500h4" />
				</Icon>
			</button>
			<button type="button" aria-label="改ページ プレビュー" className="flex w-10 justify-center">
				<Icon size={14}>
					<path d="M.5.500h13v12H.500zM4.500.500v7M9.500.500v7M.500 7.500h9" />
				</Icon>
			</button>
			<button type="button" aria-label="縮小" className="ml-[5px]">
				<Icon size={9}>
					<path d="M.5 4.500h8" />
				</Icon>
			</button>
			<input
				type="range"
				aria-label="ズーム"
				defaultValue={50}
				className="mx-[5px] h-4 w-[101px] appearance-none bg-transparent [&::-webkit-slider-runnable-track]:h-px [&::-webkit-slider-runnable-track]:bg-[#666] [&::-webkit-slider-thumb]:-mt-[5px] [&::-webkit-slider-thumb]:h-[11px] [&::-webkit-slider-thumb]:w-[5px] [&::-webkit-slider-thumb]:appearance-none [&::-webkit-slider-thumb]:bg-[#666]"
			/>
			<button type="button" aria-label="拡大">
				<Icon size={9}>
					<path d="M.5 4.500h8M4.500.500v8" />
				</Icon>
			</button>
			<span className="ml-3 w-[51px]">100%</span>
		</div>
	</footer>
)

/* ---------- step markers ---------- */

const frames = [
	'top-[42px] left-[49px] h-[45px] w-[71px]',
	'top-[80px] left-[521px] h-[44px] w-[47px]',
	'top-[117px] left-[521px] h-[42px] w-[47px]',
]

const markers = [
	{ text: '⑩', place: 'top-[359px] left-[898px]' },
	{ text: '⑪', place: 'top-[39px] left-[123px]' },
	{ text: '⑫', place: 'top-[49px] left-[571px]' },
	{ text: '⑬', place: 'top-[127px] left-[571px]' },
]

const Annotations = () => (
	<div className="pointer-events-none">
		{frames.map((place) => (
			<div
				key={place}
				className={`absolute rounded-[6px] border-[7px] border-[#f00] drop-shadow-[1px_2px_3px_rgba(0,0,0,0.65)] ${place}`}
			/>
		))}
		{markers.map((marker) => (
			<svg
				key={marker.text}
				width="60"
				height="60"
				viewBox="0 0 60 60"
				className={`absolute drop-shadow-[2px_3px_3px_rgba(0,0,0,0.6)] ${marker.place}`}
			>
				<text
					x="30"
					y="47"
					textAnchor="middle"
					fill="#f00"
					stroke="#fff"
					strokeWidth="6"
					strokeLinejoin="round"
					paintOrder="stroke"
					className="font-['Noto_Sans_CJK_JP',sans-serif] text-[45px] font-medium"
				>
					{marker.text}
				</text>
			</svg>
		))}
	</div>
)

export default function App() {
	return (
		<div className="relative flex h-screen flex-col overflow-hidden border-x border-b border-[#107c41] bg-[#efefef] font-['Noto_Sans','Noto_Sans_CJK_JP',sans-serif] text-xs text-[#262626] [font-feature-settings:'palt']">
			<TitleBar />
			<TabBar />
			<Ribbon />
			<FormulaBar />
			<main className="-mt-px flex min-h-0 flex-1">
				<Sheet />
				<VerticalScroll />
			</main>
			<SheetTabs />
			<StatusBar />
			<Annotations />
		</div>
	)
}
